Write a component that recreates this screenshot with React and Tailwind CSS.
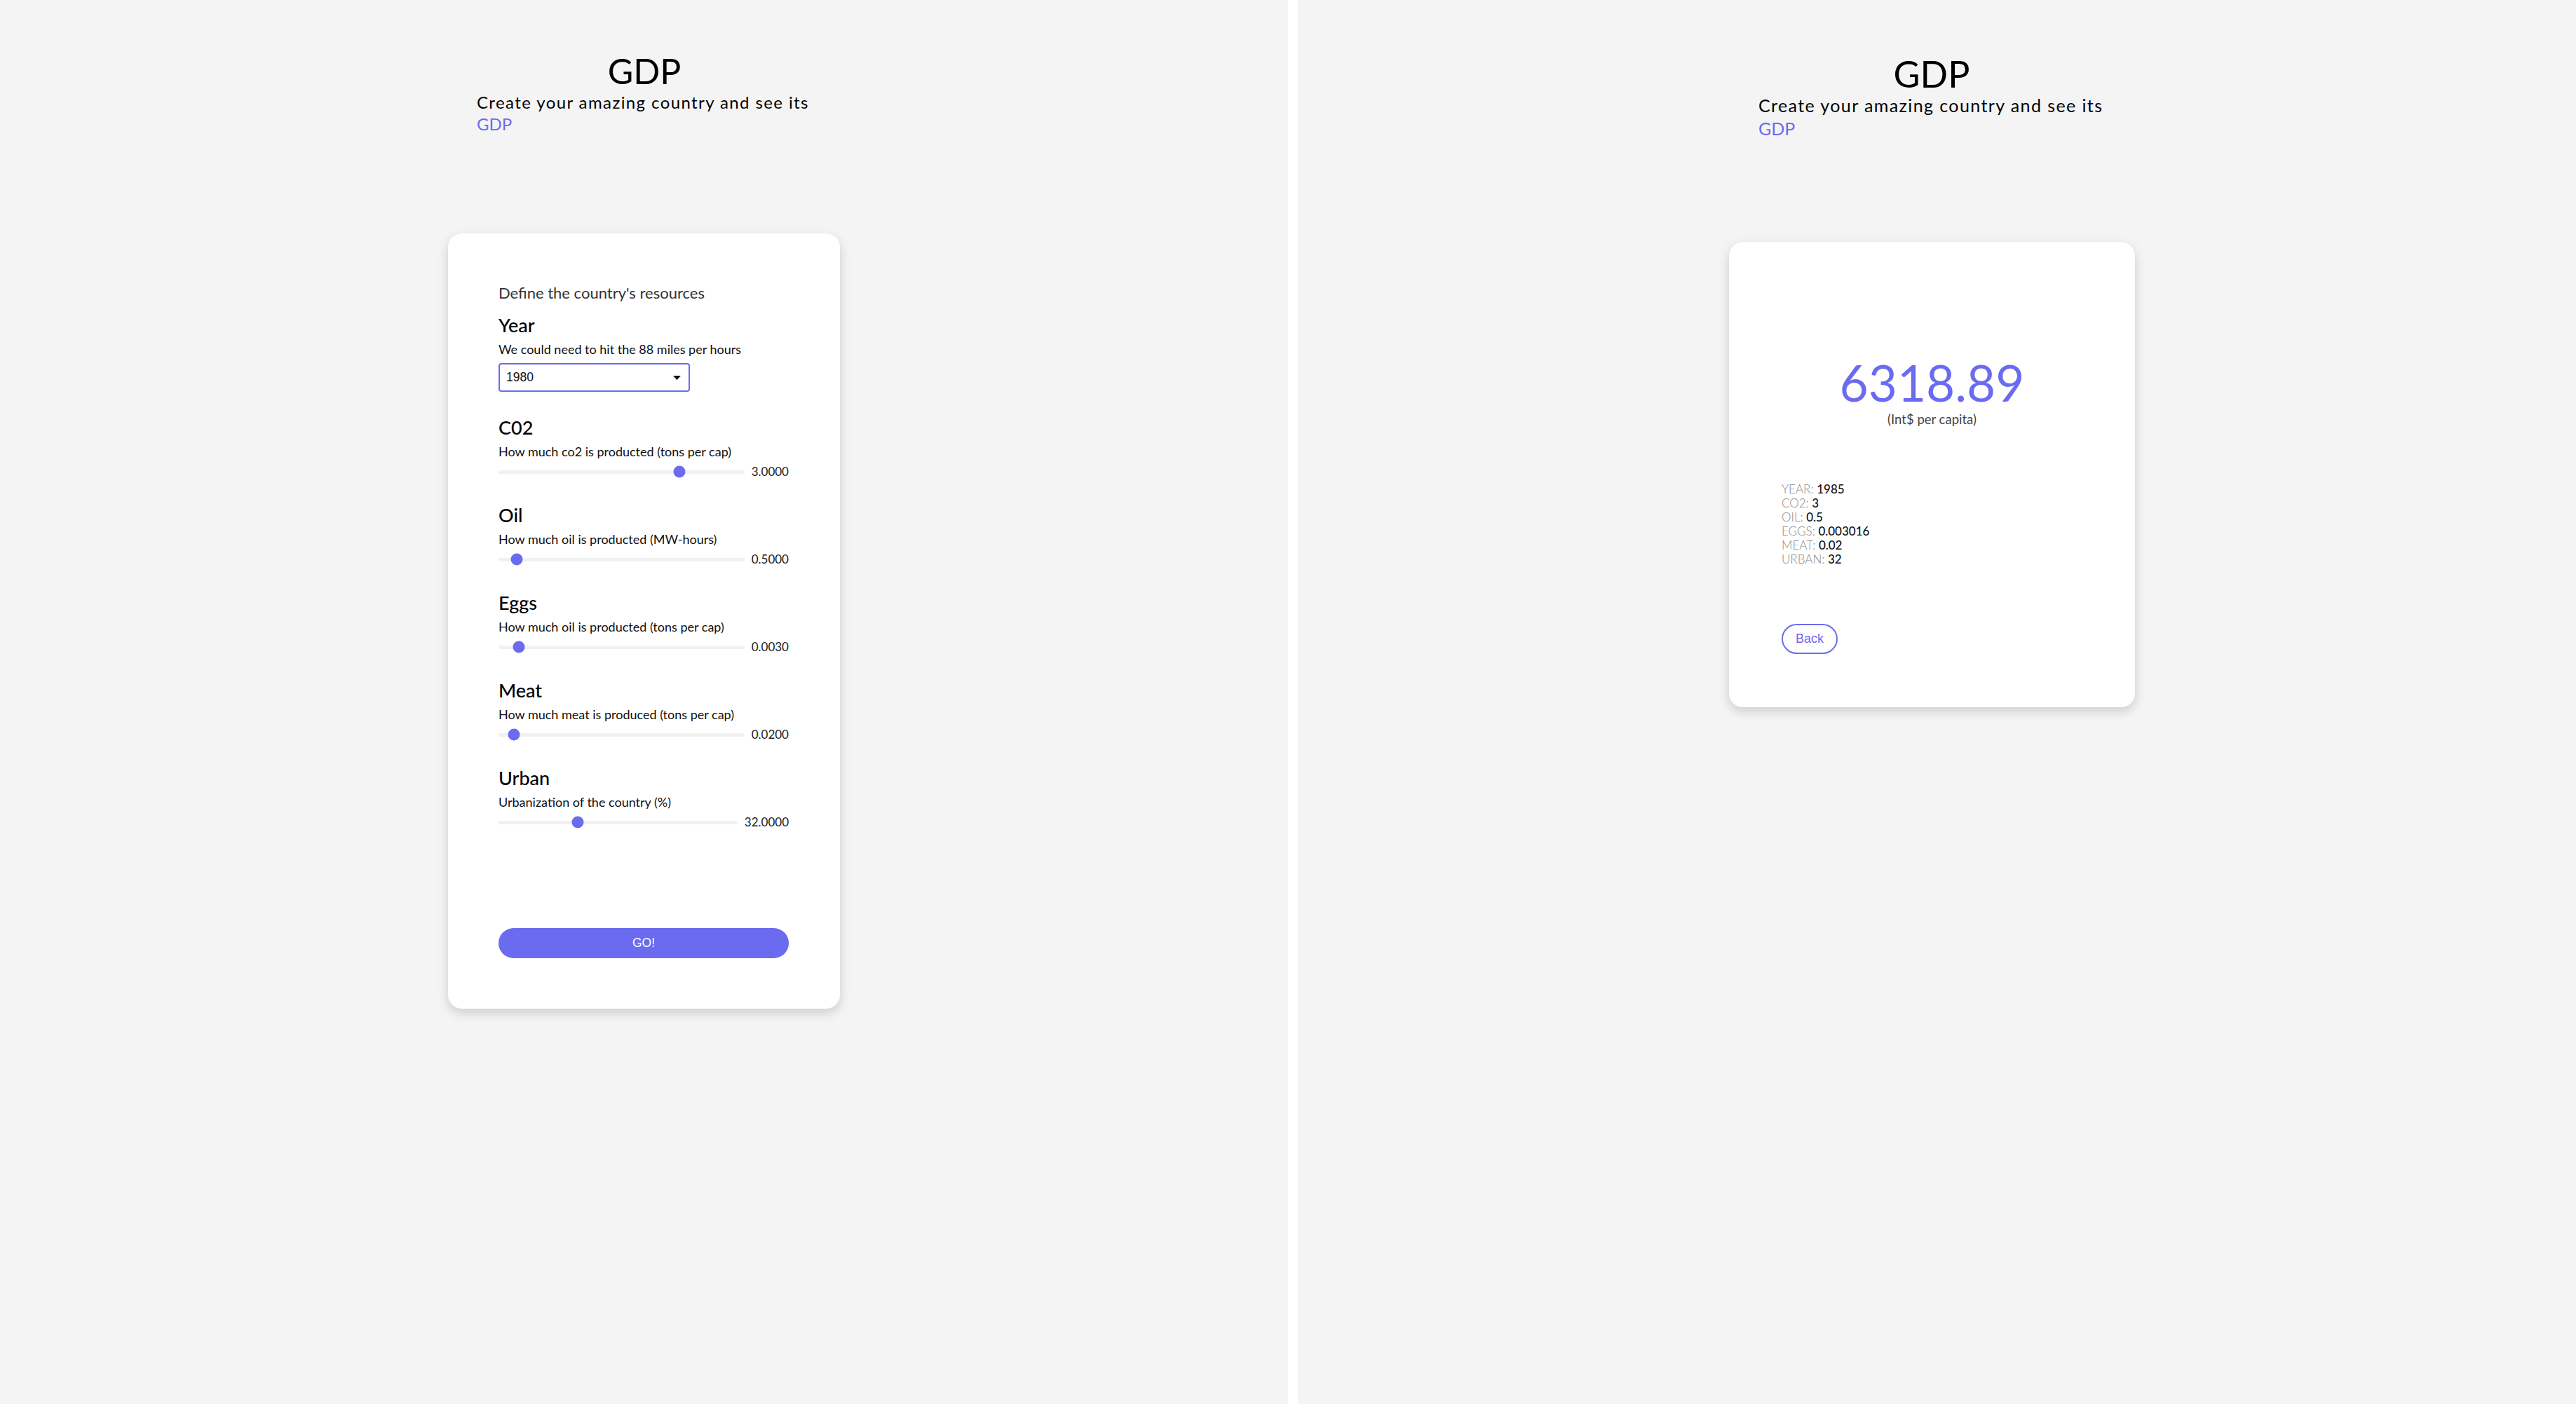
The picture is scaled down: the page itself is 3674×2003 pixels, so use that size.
import React from 'react';

const resources = [
    { label: 'C02', desc: 'How much co2 is producted (tons per cap)', value: '3.0000', pct: 73.7 },
    { label: 'Oil', desc: 'How much oil is producted (MW-hours)', value: '0.5000', pct: 7.5 },
    { label: 'Eggs', desc: 'How much oil is producted (tons per cap)', value: '0.0030', pct: 8.2 },
    { label: 'Meat', desc: 'How much meat is produced (tons per cap)', value: '0.0200', pct: 6.4 },
    { label: 'Urban', desc: 'Urbanization of the country (%)', value: '32.0000', pct: 33.1 },
];

const results = [
    { label: 'YEAR', value: '1985' },
    { label: 'CO2', value: '3' },
    { label: 'OIL', value: '0.5' },
    { label: 'EGGS', value: '0.003016' },
    { label: 'MEAT', value: '0.02' },
    { label: 'URBAN', value: '32' },
];

const Slider = ({ value, pct }) => (
    <div className='flex items-center gap-[10px] mt-[8px] h-[20px]'>
        <div className='relative flex-1 h-[5px] rounded-full bg-[#f1f1f1]'>
            <div
                className='absolute top-1/2 w-[17px] h-[17px] -translate-x-1/2 -translate-y-1/2 rounded-full bg-[#6b6bf0]'
                style={{ left: `${pct}%` }}
            ></div>
        </div>
        <span className='text-[17px] leading-[20px] text-[#222]'>{value}</span>
    </div>
);

const Header = ({ big }) => (
    <div className={big ? 'w-[494px] ml-[657px]' : 'w-[478px] ml-[680px]'}>
        <h1 className={`text-center font-normal leading-none text-black ${big ? 'text-[52px]' : 'text-[50px]'}`}>GDP</h1>
        <p className={big ? 'mt-[3px] text-[25px] leading-[32.5px] tracking-[1.4px] text-black' : 'mt-[4px] text-[24px] leading-[31px] tracking-[1.4px] text-black'}>
            <span className='whitespace-nowrap'>Create your amazing country and see its</span>
            <br />
            <span className='text-[#6b6bf0] tracking-normal'>GDP</span>
        </p>
    </div>
);

const App = () => {
    return (
        <div className="flex w-full h-[2003px] bg-white font-['Lato',sans-serif]">
            <div className='w-[1837px] h-full bg-[#f4f4f4] pt-[76px]'>
                <Header />

                <div className='ml-[639px] mt-[141px] w-[559px] h-[1106px] rounded-[20px] bg-white shadow-[0_6px_16px_rgba(0,0,0,0.16)] pl-[72px] pr-[73px] pt-[71px]'>
                    <h2 className='text-[22px] leading-[28px] font-normal text-[#333]'>Define the country's resources</h2>

                    <div className='mt-[17px]'>
                        <h3 className='text-[27px] leading-[30px] font-medium text-black'>Year</h3>
                        <p className='mt-[8px] text-[18px] leading-[22px] text-[#111]'>We could need to hit the 88 miles per hours</p>
                        <div className='mt-[9px] w-[273px] h-[41px] border-2 border-[#6b6bf0] rounded-[4px] flex items-center justify-between pl-[9px] pr-[11px]'>
                            <span className="font-['Liberation_Sans',sans-serif] text-[17.5px] text-[#111]">1980</span>
                            <svg width='11' height='6' viewBox='0 0 11 6'>
                                <path d='M0 0 L11 0 L5.5 6 Z' fill='#111' />
                            </svg>
                        </div>
                    </div>

                    {resources.map((item, idx) => (
                        <div key={item.label} className={idx === 0 ? 'mt-[36px]' : 'mt-[37px]'}>
                            <h3 className='text-[27px] leading-[30px] font-medium text-black'>{item.label}</h3>
                            <p className='mt-[8px] text-[18px] leading-[22px] text-[#111]'>{item.desc}</p>
                            <Slider value={item.value} pct={item.pct} />
                        </div>
                    ))}

                    <button className="mt-[141px] w-full h-[43px] rounded-full bg-[#6b6bf0] text-white font-['Liberation_Sans',sans-serif] text-[17.5px]">
                        GO!
                    </button>
                </div>
            </div>

            <div className='w-[14px] h-full bg-white'></div>

            <div className='flex-1 h-full bg-[#f4f4f4] pt-[79px]'>
                <Header big />

                <div className='ml-[615px] mt-[146px] w-[579px] h-[664px] rounded-[20px] bg-white shadow-[0_6px_16px_rgba(0,0,0,0.16)] pl-[75px] pr-[75px] pt-[165px]'>
                    <div className='-ml-[75px] -mr-[75px] text-center text-[71px] leading-none text-[#6b6bf0]'>6318.89</div>
                    <div className='-ml-[75px] -mr-[75px] mt-[7px] text-center text-[18.5px] leading-[20px] text-[#444]'>(Int$ per capita)</div>

                    <div className='mt-[80px]'>
                        {results.map((r) => (
                            <div key={r.label} className='text-[17px] leading-[20px]'>
                                <span className='font-light text-[#888]'>{r.label}: </span>
                                <span className='font-medium text-[#111]'>{r.value}</span>
                            </div>
                        ))}
                    </div>

                    <button className="mt-[82px] w-[80px] h-[43px] rounded-full border-2 border-[#6b6bf0] text-[#6b6bf0] font-['Liberation_Sans',sans-serif] text-[18px]">
                        Back
                    </button>
                </div>
            </div>
        </div>
    );
};

export default App;
